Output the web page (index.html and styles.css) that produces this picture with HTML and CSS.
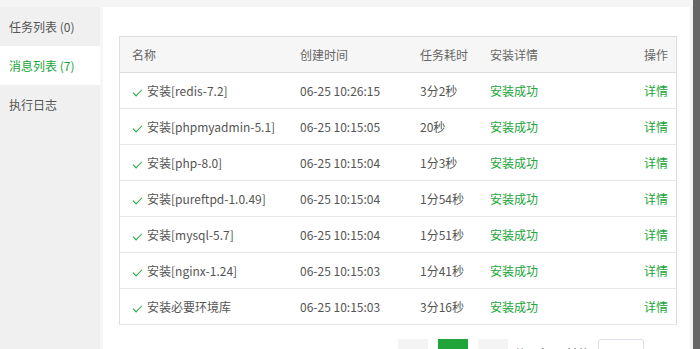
FILE: index.html
```html
<!DOCTYPE html>
<html lang="zh-CN">
<head>
    <meta charset="UTF-8">
    <title>消息列表</title>
    <link rel="stylesheet" href="styles.css">
</head>
<body>
    <div class="layer">
        <div class="layer-top"></div>
        <div class="layer-body">
            <ul class="tabs">
                <li class="tab">任务列表 (0)</li>
                <li class="tab active">消息列表 (7)</li>
                <li class="tab">执行日志</li>
            </ul>
            <div class="content">
                <table class="task-table">
                    <thead>
                        <tr>
                            <th class="col-name">名称</th>
                            <th class="col-time">创建时间</th>
                            <th class="col-cost">任务耗时</th>
                            <th class="col-state">安装详情</th>
                            <th class="col-op">操作</th>
                        </tr>
                    </thead>
                    <tbody>
                        <tr>
                            <td class="col-name"><span class="check"></span>安装[redis-7.2]</td>
                            <td>06-25 10:26:15</td>
                            <td>3分2秒</td>
                            <td class="green">安装成功</td>
                            <td class="col-op green">详情</td>
                        </tr>
                        <tr>
                            <td class="col-name"><span class="check"></span>安装[phpmyadmin-5.1]</td>
                            <td>06-25 10:15:05</td>
                            <td>20秒</td>
                            <td class="green">安装成功</td>
                            <td class="col-op green">详情</td>
                        </tr>
                        <tr>
                            <td class="col-name"><span class="check"></span>安装[php-8.0]</td>
                            <td>06-25 10:15:04</td>
                            <td>1分3秒</td>
                            <td class="green">安装成功</td>
                            <td class="col-op green">详情</td>
                        </tr>
                        <tr>
                            <td class="col-name"><span class="check"></span>安装[pureftpd-1.0.49]</td>
                            <td>06-25 10:15:04</td>
                            <td>1分54秒</td>
                            <td class="green">安装成功</td>
                            <td class="col-op green">详情</td>
                        </tr>
                        <tr>
                            <td class="col-name"><span class="check"></span>安装[mysql-5.7]</td>
                            <td>06-25 10:15:04</td>
                            <td>1分51秒</td>
                            <td class="green">安装成功</td>
                            <td class="col-op green">详情</td>
                        </tr>
                        <tr>
                            <td class="col-name"><span class="check"></span>安装[nginx-1.24]</td>
                            <td>06-25 10:15:03</td>
                            <td>1分41秒</td>
                            <td class="green">安装成功</td>
                            <td class="col-op green">详情</td>
                        </tr>
                        <tr>
                            <td class="col-name"><span class="check"></span>安装必要环境库</td>
                            <td>06-25 10:15:03</td>
                            <td>3分16秒</td>
                            <td class="green">安装成功</td>
                            <td class="col-op green">详情</td>
                        </tr>
                    </tbody>
                </table>
                <div class="pager">
                    <span class="page-btn">‹</span>
                    <span class="page-btn current">1</span>
                    <span class="page-btn">›</span>
                    <span class="page-total">共 7 条</span>
                    <span class="page-text">前往</span>
                    <span class="page-input">1</span>
                    <span class="page-text">页</span>
                </div>
            </div>
            <div class="scroll-edge"></div>
        </div>
    </div>
</body>
</html>
```

FILE: styles.css
```css
body {
    margin: 0;
    width: 700px;
    height: 349px;
    overflow: hidden;
    background-color: #666;
    font-family: "Noto Sans CJK SC", "Noto Sans", sans-serif;
    font-size: 12px;
    color: #555;
}

.layer {
    width: 693px;
    height: 349px;
    overflow: hidden;
    background-color: #fff;
    display: flex;
    flex-direction: column;
}

.layer-top {
    height: 7px;
    background-color: #f5f5f5;
}

.layer-body {
    flex: 1;
    display: flex;
    min-height: 0;
}

.tabs {
    list-style: none;
    margin: 0;
    padding: 0;
    width: 100px;
    background-color: #f0f0f0;
    border-right: 3px solid #f7f7f7;
}

.tab {
    height: 39px;
    line-height: 39px;
    padding-left: 9px;
    font-size: 12px;
    color: #555;
}

.tab.active {
    background-color: #fff;
    color: #20a53a;
}

.content {
    flex: 1;
    padding: 29px 13px 0 16px;
}

.scroll-edge {
    width: 3px;
    background-color: #f2f2f2;
}

.task-table {
    width: 558px;
    border-collapse: collapse;
    border: 1px solid #ddd;
}

.task-table th,
.task-table td {
    height: 35px;
    padding: 0 0 0 12px;
    text-align: left;
    font-weight: normal;
    border-bottom: 1px solid #e6e6e6;
    white-space: nowrap;
}

.task-table th {
    background-color: #f6f6f6;
    color: #666;
    border-bottom: 1px solid #ddd;
}

.task-table .col-name {
    width: 156px;
}

.task-table th.col-time {
    width: 108px;
}

.task-table th.col-cost {
    width: 58px;
}

.task-table .col-op {
    text-align: right;
    padding-right: 8px;
}

.green {
    color: #20a53a;
}

.check {
    display: inline-block;
    width: 8px;
    height: 4px;
    border-left: 1.5px solid #20a53a;
    border-bottom: 1.5px solid #20a53a;
    transform: rotate(-45deg);
    margin: 0 5px 3px 1px;
    vertical-align: middle;
}

.pager {
    display: flex;
    align-items: center;
    margin-top: 14px;
    padding-left: 279px;
}

.page-btn {
    width: 30px;
    height: 28px;
    line-height: 28px;
    margin-right: 10px;
    text-align: center;
    background-color: #f4f4f5;
    color: #c0c4cc;
    font-size: 14px;
}

.page-btn.current {
    background-color: #20a53a;
    color: #fff;
    font-size: 12px;
    font-weight: bold;
}

.page-total {
    margin-left: -4px;
    margin-right: 16px;
    color: #555;
}

.page-text {
    color: #555;
}

.page-input {
    width: 44px;
    height: 26px;
    line-height: 26px;
    margin: 0 5px 0 8px;
    border: 1px solid #dcdfe6;
    border-radius: 3px;
    text-align: center;
}
```
